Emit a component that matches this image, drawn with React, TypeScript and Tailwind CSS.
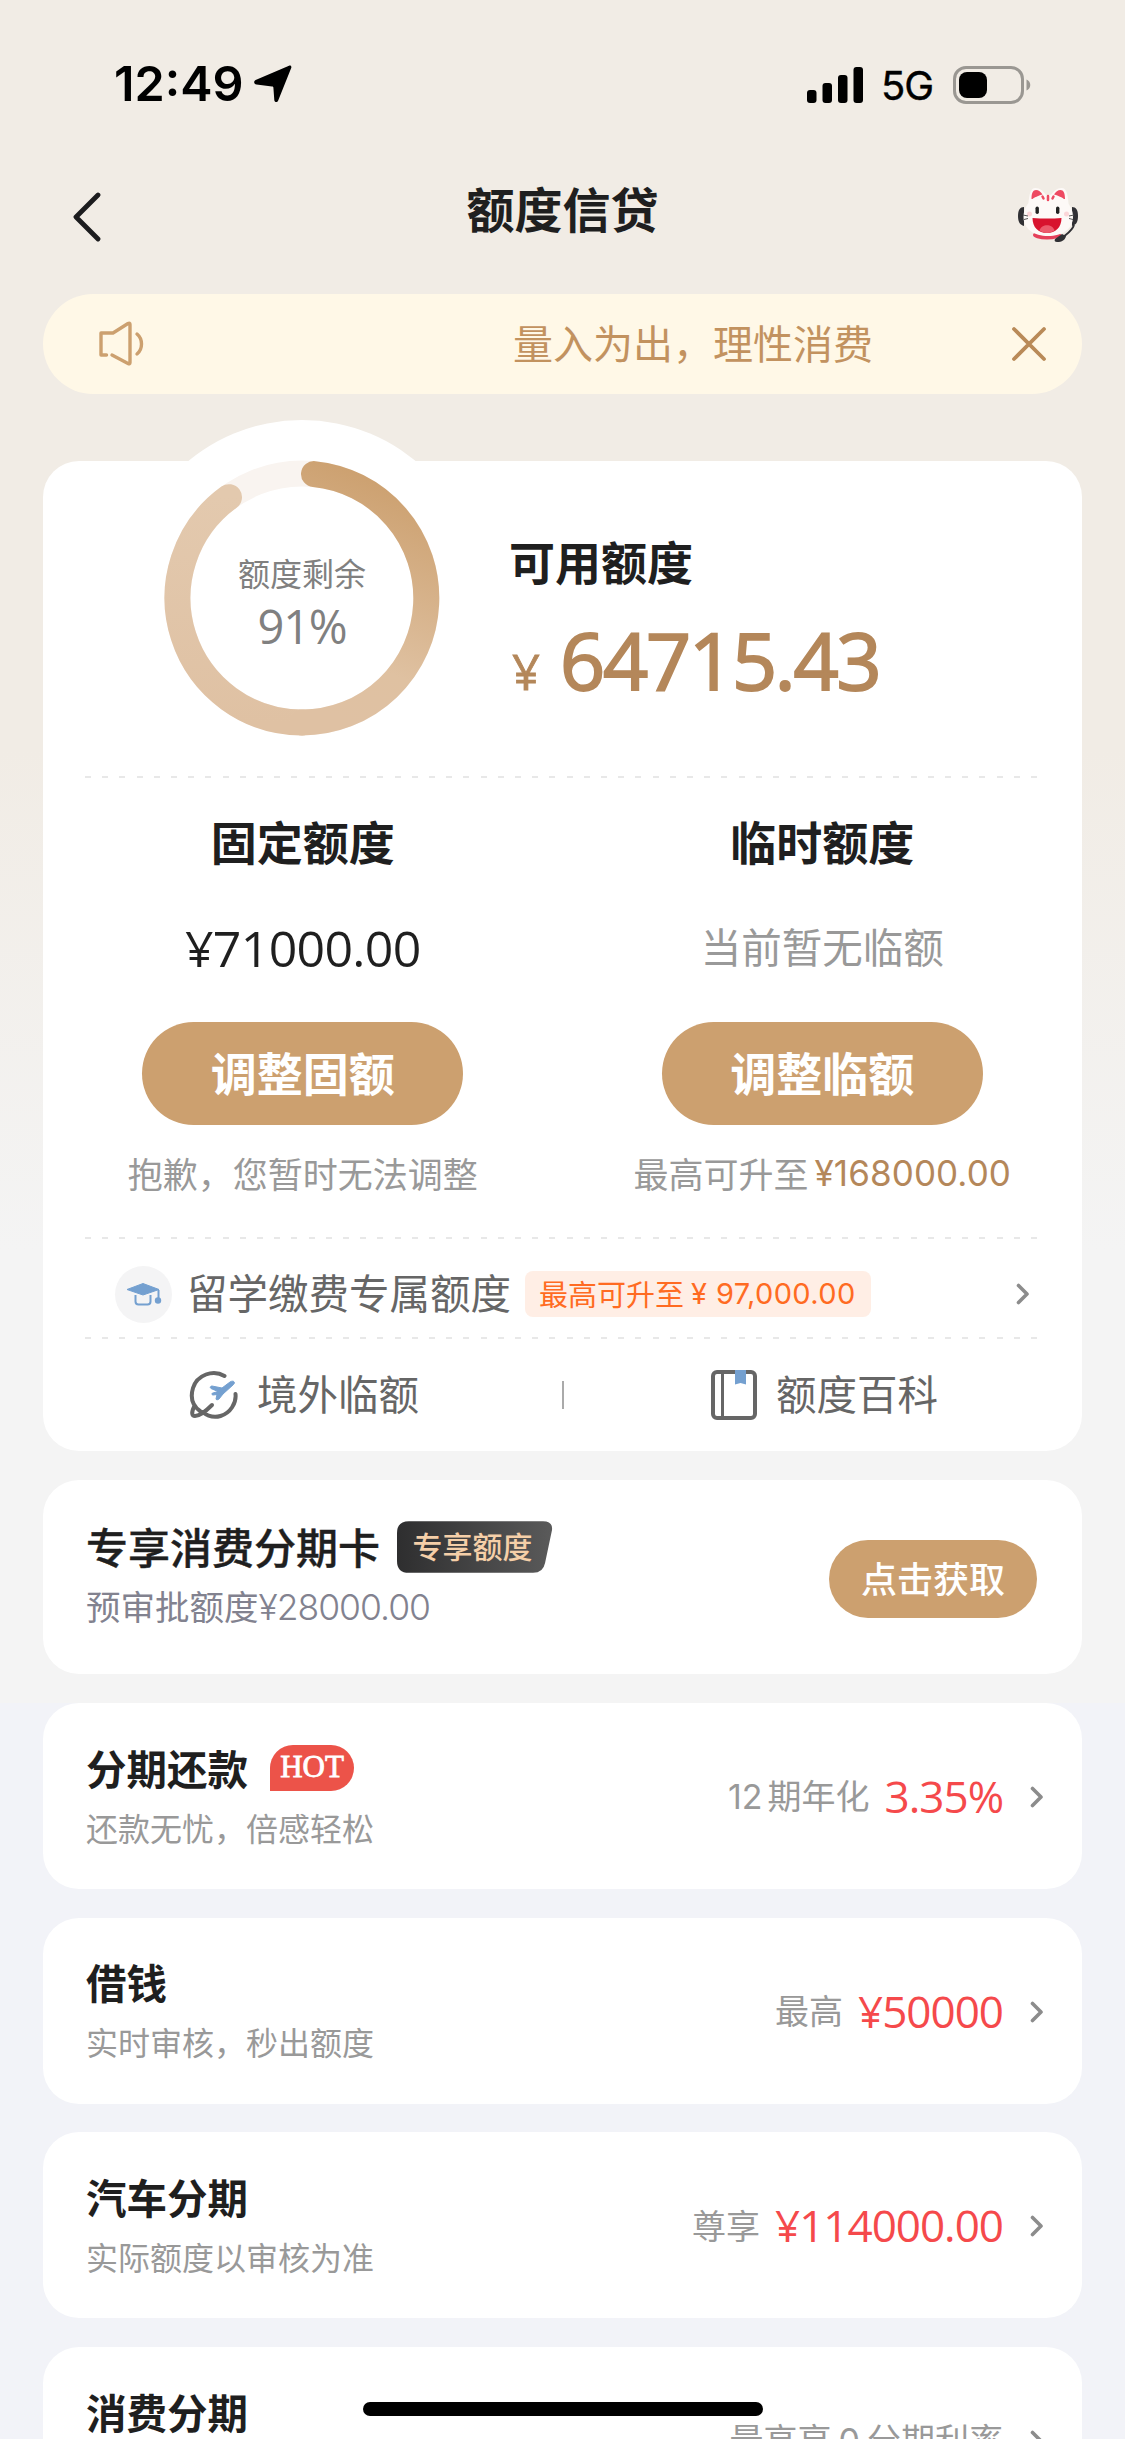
import React from 'react';

const NUM = "font-['Open_Sans','Noto_Sans_CJK_SC',sans-serif]";
const NUM_SM = "font-['Inter','Noto_Sans_CJK_SC',sans-serif]";

function Chevron() {
  return (
    <svg width="14" height="22" viewBox="0 0 14 22" fill="none" className="shrink-0">
      <path d="M2.500 2.500L11 11l-8.500 8.500" stroke="#8c8c8c" strokeWidth="3.600" strokeLinecap="round" strokeLinejoin="round" />
    </svg>
  );
}

function DashedLine() {
  return (
    <div className="mx-[42px] h-[2px] bg-[repeating-linear-gradient(90deg,#e8e8e8_0px,#e8e8e8_6px,transparent_6px,transparent_17.2px)]" />
  );
}

function StatusBar() {
  return (
    <div className="flex h-[166px] items-start justify-between pl-[114px] pr-[93px] pt-[59px] text-black">
      <div className="flex items-center">
        <span className="font-['Inter',sans-serif] text-[48.500px] font-semibold leading-[50px]">12:49</span>
        <svg width="38" height="38" viewBox="0 0 38 38" className="ml-[10px]">
          <path d="M35 .8c1.600-.7 2.700.4 2.300 2L24.200 35.500c-.9 2.200-3.700 2-3.900-.5L19.400 22.800c0-.9-.5-1.300-1.400-1.300L2.500 19.600c-2.700-.2-3.100-3.400-.9-4.500z" />
        </svg>
      </div>
      <div className="flex items-center">
        <svg width="56" height="37" viewBox="0 0 56 37">
          <rect x="0" y="23" width="9.500" height="13" rx="3" />
          <rect x="15.500" y="16" width="9.500" height="20" rx="3" />
          <rect x="31" y="8" width="9.500" height="28" rx="3" />
          <rect x="46.500" y="0" width="9.500" height="36" rx="3" />
        </svg>
        <span className="ml-[18px] mt-[2px] w-[72px] font-['Inter',sans-serif] text-[40px] leading-[50px] tracking-[-1px] [-webkit-text-stroke:0.4px_black]">5G</span>
        <svg width="79" height="38" viewBox="0 0 79 38">
          <rect x="1.500" y="1.500" width="68" height="35" rx="11.500" fill="none" stroke="#9a9792" strokeWidth="3" />
          <rect x="6" y="6" width="28" height="26" rx="8" />
          <path d="M73.500 13.500c5 2 5 9 0 11z" fill="#9a9792" />
        </svg>
      </div>
    </div>
  );
}

function CatAvatar() {
  return (
    <svg width="62" height="56" viewBox="0 0 62 56">
      <path d="M7 20c-4 0-6 3-6 9s2 9 6 10zM55 20c4 0 6 3 6 9s-2 9-6 10z" fill="#303034" />
      <ellipse cx="30" cy="48" rx="14" ry="4.500" fill="#e5405a" />
      <path d="M11 22C12 8 13 1 18.500 1c4.500 0 7.500 3 10.500 7h5c3-4 6-7 10.500-7C50 1 51 8 52 22z" fill="#fdf9f7" />
      <path d="M14.500 12c0-6 1.500-9 4.500-9 2.500 0 5 2 6.500 4.500C22 8.500 18 10 15.500 12z" fill="#ee4a62" />
      <path d="M48 12c0-6-1.500-9-4.500-9-2.500 0-5 2-6.500 4.500C40.500 8.500 44.500 10 47 12z" fill="#ee4a62" />
      <path d="M31 8c14 0 25 9 25 22 0 12-11 19-25 19S6.500 42 6.500 30C6.500 17 17 8 31 8z" fill="#fdf9f7" />
      <path d="M31 9v4M25.500 9.500l1 2M36.500 9.500l-1 2" stroke="#ee4a62" strokeWidth="2.500" strokeLinecap="round" />
      <rect x="18.500" y="19.500" width="3.400" height="7.500" rx="1.700" fill="#222" />
      <rect x="39" y="19.500" width="3.400" height="7.500" rx="1.700" fill="#222" />
      <circle cx="12.500" cy="27" r="2.500" fill="#fbd6d8" />
      <circle cx="49.500" cy="27" r="2.500" fill="#fbd6d8" />
      <path d="M6 28l5 1M7 32.500l4-1M57 28l-5 1M56 32.500l-4-1" stroke="#555" strokeWidth="1" />
      <path d="M15.500 31q15 1 29 0c0 9.500-6 15-14.500 15S15.500 40.500 15.500 31z" fill="#d8132e" />
      <path d="M22.500 43.500c2-7 13-7 15 0-4 3.300-11 3.300-15 0z" fill="#ec5a6c" />
      <path d="M57 38c-2 6-6 8-11 12" fill="none" stroke="#303034" strokeWidth="2" />
      <path d="M38 52l7-5 4 2c-1 4-4 6-9 6-2 0-3-1-2-3z" fill="#303034" />
    </svg>
  );
}

function QuotaRing() {
  return (
    <svg width="356" height="356" viewBox="0 0 356 356" className="col-start-1 row-start-1">
      <defs>
        <linearGradient id="ring" x1="0.6" y1="0" x2="0.4" y2="1">
          <stop offset="0" stopColor="#cca06f" />
          <stop offset="0.75" stopColor="#dfc1a1" />
          <stop offset="1" stopColor="#dfc1a3" />
        </linearGradient>
        <linearGradient id="ringTail" x1="0" y1="0" x2="0" y2="1">
          <stop offset="0" stopColor="#e3c9ae" />
          <stop offset="1" stopColor="#dfc1a3" />
        </linearGradient>
      </defs>
      <circle cx="178" cy="178" r="178" fill="#fff" />
      <circle cx="178" cy="178" r="124.500" fill="none" stroke="#f9f4f0" strokeWidth="26" />
      <path d="M178 302.500A124.500 124.500 0 0 1 105 77.150" fill="none" stroke="url(#ringTail)" strokeWidth="26" strokeLinecap="round" />
      <path d="M190 54.100A124.500 124.500 0 0 1 178 302.500" fill="none" stroke="url(#ring)" strokeWidth="26" strokeLinecap="round" />
    </svg>
  );
}

function LimitCard() {
  return (
    <section className="mx-[43px] mt-[67px] h-[990px] rounded-[36px] bg-white">
      <div className="flex h-[315px]">
        <div className="-mt-[41px] ml-[81px] grid h-[356px] w-[356px] shrink-0 place-items-center">
          <QuotaRing />
          <div className="col-start-1 row-start-1 text-center text-[#808080]">
            <div className="mt-[10px] text-[32px] leading-[40px]">额度剩余</div>
            <div className={`${NUM} mt-[6px] text-[47px] leading-[56px] tracking-[-1.200px]`}>91%</div>
          </div>
        </div>
        <div className="ml-[29px] pt-[69px]">
          <h2 className="text-[46px] font-bold leading-[60px]">可用额度</h2>
          <div className={`${NUM} mt-[2px] flex items-baseline text-[#b4875a]`}>
            <span className="ml-[3px] w-[48px] text-[49px] [-webkit-text-stroke:0.8px_#b4875a]">¥</span>
            <span className="text-[79px] leading-[136px] tracking-[-2.200px] [-webkit-text-stroke:2px_#b4875a]">64715.43</span>
          </div>
        </div>
      </div>
      <DashedLine />

      <div className="grid h-[459px] grid-cols-2 text-center">
        <div className="flex flex-col items-center pt-[32px]">
          <h3 className="text-[46px] font-bold leading-[60px]">固定额度</h3>
          <div className={`${NUM} mt-[48px] text-[50px] leading-[60px] tracking-[-0.7px]`}>¥71000.00</div>
          <button className="mt-[44px] h-[103px] w-[321px] rounded-full bg-[#cca06f] pb-[4px] text-[46px] font-bold text-white">调整固额</button>
          <p className="mt-[23px] text-[35px] leading-[50px] text-[#999]">抱歉，您暂时无法调整</p>
        </div>
        <div className="flex flex-col items-center pt-[32px]">
          <h3 className="text-[46px] font-bold leading-[60px]">临时额度</h3>
          <div className="mt-[45px] text-[40.500px] leading-[62px] text-[#999]">当前暂无临额</div>
          <button className="mt-[45px] h-[103px] w-[321px] rounded-full bg-[#cca06f] pb-[4px] text-[46px] font-bold text-white">调整临额</button>
          <p className="mt-[23px] flex whitespace-nowrap text-[35px] leading-[50px] text-[#999]">
            最高可升至<span className={`${NUM_SM} ml-[6px] tracking-[0.100px] text-[#b4875a]`}>¥168000.00</span>
          </p>
        </div>
      </div>
      <DashedLine />

      <div className="flex h-[98px] items-center pl-[72px] pr-[52px] pt-[12px]">
        <div className="flex h-[57px] w-[57px] items-center justify-center rounded-full bg-[#f4f4f5]">
          <svg width="36" height="24" viewBox="0 0 36 24">
            <path d="M1 7.500L17 1.500l16 6L17 13z" fill="#74a0d0" stroke="#74a0d0" strokeLinejoin="round" />
            <path d="M9.500 13v6.500q0 3 3 3h9q3 0 3-3V13" fill="none" stroke="#74a0d0" strokeWidth="2" />
            <path d="M32.500 8v9" stroke="#74a0d0" strokeWidth="2" />
            <circle cx="32" cy="18.500" r="3.200" fill="#74a0d0" />
          </svg>
        </div>
        <span className="-mt-[3px] ml-[15px] text-[40.500px] text-[#666]">留学缴费专属额度</span>
        <div className="ml-[14px] flex h-[46px] w-[346px] items-center whitespace-nowrap rounded-[8px] bg-[#ffeee5] pl-[14px] text-[29px] text-[#ff6b22]">
          最高可升至<span className={`${NUM_SM} ml-[7px] text-[29px] tracking-[0.400px]`}>¥ 97,000.00</span>
        </div>
        <div className="ml-auto"><Chevron /></div>
      </div>
      <DashedLine />

      <div className="flex h-[112px] items-center text-[40.500px] text-[#666]">
        <div className="flex w-[519px] items-center pl-[146px]">
          <svg width="50" height="50" viewBox="0 0 50 50" fill="none">
            <path d="M35.500 6C24-1 8 5 4 18c-3 10 0 18 7 23" stroke="#666" strokeWidth="4" strokeLinecap="round" />
            <path d="M46.500 24c1 9-5 19-15 22-7 2-13 0-18-4" stroke="#666" strokeWidth="4" strokeLinecap="round" />
            <path d="M5 37c-3 6-2 9 1 9 5 0 11-5 17-11" stroke="#666" strokeWidth="4" strokeLinecap="round" />
            <path d="M22 18.500c-1.500-1-.5-2.500 1-2.500l10 2 8-6c3-2 6 0 3.500 2.500L34 24l-4 5c-1 1-3 1-3 0l1-4.500-4 .5c-2-.5-1-2 0-2l5-1.500z" fill="#74a0d0" stroke="#74a0d0" strokeWidth="1" />
          </svg>
          <span className="-mt-[4px] ml-[18px]">境外临额</span>
        </div>
        <div className="h-[28px] w-[2px] bg-[#aaa]" />
        <div className="flex items-center pl-[147px]">
          <svg width="46" height="50" viewBox="0 0 46 50" fill="none">
            <rect x="2" y="2" width="42" height="46" rx="4" stroke="#666" strokeWidth="4" />
            <path d="M11.500 2v46" stroke="#666" strokeWidth="3" />
            <path d="M24 0h11v14.500l-5.500-1.500-5.500 1.500z" fill="#74a0d0" />
          </svg>
          <span className="-mt-[4px] ml-[19px]">额度百科</span>
        </div>
      </div>
    </section>
  );
}

function CardOffer() {
  return (
    <section className="mx-[43px] mt-[29px] flex h-[194px] items-center justify-between rounded-[36px] bg-white pl-[43px] pr-[45px]">
      <div className="-mt-[6px]">
        <div className="flex items-center">
          <h3 className="text-[42px] font-medium leading-[60px] [-webkit-text-stroke:0.4px_#1f1f1f]">专享消费分期卡</h3>
          <div className="ml-[17px] mt-[3px] grid h-[52px] w-[156px] place-items-center">
            <svg width="156" height="52" viewBox="0 0 157 52" className="col-start-1 row-start-1">
              <defs>
                <linearGradient id="tag" x1="0" y1="0" x2="1" y2="0">
                  <stop offset="0" stopColor="#2e2e2f" />
                  <stop offset="1" stopColor="#5a5a5a" />
                </linearGradient>
              </defs>
              <path d="M12 0h135q10 0 9 9l-7 33q-2 10-12 10H12Q0 52 0 40V12Q0 0 12 0z" fill="url(#tag)" />
            </svg>
            <span className="col-start-1 row-start-1 -mt-[4px] mr-[5px] text-[30px] font-medium leading-[40px] text-[#f5cfa8]">专享额度</span>
          </div>
        </div>
        <p className="mt-[4px] text-[34.500px] leading-[50px] text-[#82828f]">
          预审批额度<span className={`${NUM_SM} text-[35.500px] font-light tracking-[-1px]`}>¥28000.00</span>
        </p>
      </div>
      <button className="mt-[3px] h-[78px] w-[208px] rounded-full bg-[#cca06f] pb-[4px] text-[36px] font-medium text-white">点击获取</button>
    </section>
  );
}

type Product = {
  title: string;
  desc?: string;
  label: React.ReactNode;
  value?: string;
  hot?: boolean;
};

const products: Product[] = [
  { title: '分期还款', desc: '还款无忧，倍感轻松', label: <><span className={`${NUM_SM} mr-[5px]`}>12</span>期年化</>, value: '3.35%', hot: true },
  { title: '借钱', desc: '实时审核，秒出额度', label: '最高', value: '¥50000' },
  { title: '汽车分期', desc: '实际额度以审核为准', label: '尊享', value: '¥114000.00' },
  { title: '消费分期', label: <>最高享<span className={`${NUM_SM} mx-[7px]`}>0</span>分期利率</> },
];

function ProductCard({ title, desc, label, value, hot }: Product) {
  return (
    <section className="mx-[43px] flex h-[186px] shrink-0 items-center justify-between rounded-[36px] bg-white pl-[43px] pr-[38px]">
      <div className="-mt-[3px]">
        <div className="flex h-[60px] items-center">
          <h3 className="text-[40.500px] font-bold leading-[60px]">{title}</h3>
          {hot && (
            <span className="ml-[22px] flex h-[46px] w-[84px] items-center justify-center rounded-[23px] rounded-bl-none bg-[#ec5349] font-['Liberation_Serif',serif] text-[31px] text-white [-webkit-text-stroke:0.8px_white]">
              HOT
            </span>
          )}
        </div>
        <p className="mt-[4px] h-[50px] text-[32px] leading-[50px] text-[#999]">{desc}</p>
      </div>
      <div className="flex items-center">
        <span className="-mt-[2px] text-[34px] text-[#999]">{label}</span>
        {value && <span className={`${NUM} ml-[15px] text-[44px] tracking-[-1px] text-[#f5494b]`}>{value}</span>}
        <div className="ml-[27px] mt-[2px]"><Chevron /></div>
      </div>
    </section>
  );
}

export default function App() {
  return (
    <div lang="zh-CN" className="relative h-[2439px] w-[1125px] overflow-hidden bg-[#f2f3f8] font-['Noto_Sans_CJK_SC',sans-serif] text-[#1f1f1f]">
      <div className="bg-[linear-gradient(180deg,#f1ece5_0px,#f1ece5_750px,#f4f4f4_1250px,#f4f4f4_1703px)]">
        <StatusBar />
        <header className="grid h-[128px] grid-cols-[1fr_auto_1fr] items-start">
          <svg width="30" height="50" viewBox="0 0 30 50" fill="none" className="ml-[72px] mt-[26px]">
            <path d="M26 3L4 25l22 22" stroke="#1c1c1e" strokeWidth="4.800" strokeLinecap="round" strokeLinejoin="round" />
          </svg>
          <h1 className="mt-[10px] text-[48px] font-bold leading-[62px]">额度信贷</h1>
          <div className="mr-[46px] mt-[21px] justify-self-end"><CatAvatar /></div>
        </header>
        <div className="mx-[43px] flex h-[100px] items-center rounded-full bg-[#fff8e7] pl-[55px] pr-[35px]">
          <svg width="48" height="46" viewBox="0 0 48 46" fill="none" stroke="#cca06f" strokeWidth="3.400" strokeLinecap="round" strokeLinejoin="round">
            <path d="M8.500 34H3V12h12L30 2.500q2-1 2 1v38q0 2-2 1L14 34" />
            <path d="M39 13c6 5 6 15 0 20" />
          </svg>
          <span className="-mt-[4px] ml-[367px] text-[40px] text-[#c2925f]">量入为出，理性消费</span>
          <svg width="36" height="36" viewBox="0 0 36 36" className="ml-auto">
            <path d="M3 3l30 30M33 3L3 33" stroke="#b98a58" strokeWidth="3.800" strokeLinecap="round" />
          </svg>
        </div>
        <LimitCard />
        <CardOffer />
        <div className="h-[29px]" />
      </div>
      <div className="flex flex-col gap-[28.700px]">
        {products.map((p) => (
          <ProductCard key={p.title} {...p} />
        ))}
      </div>
      <div className="absolute bottom-[23px] left-[363px] h-[14px] w-[400px] rounded-full bg-black" />
    </div>
  );
}
